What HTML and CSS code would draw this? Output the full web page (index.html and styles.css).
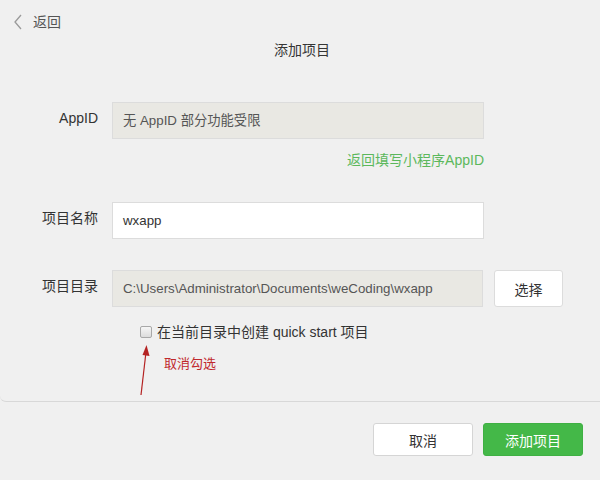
FILE: index.html
```html
<!DOCTYPE html>
<html lang="zh-CN">
<head>
    <meta charset="UTF-8">
    <meta name="viewport" content="width=device-width, initial-scale=1.0">
    <title>添加项目</title>
    <link rel="stylesheet" href="styles.css">
</head>
<body>
    <div class="panel">
        <div class="topbar">
            <svg class="back-icon" width="10" height="16" viewBox="0 0 10 16">
                <path d="M8 1 L2 8 L8 15" fill="none" stroke="#9a9a9a" stroke-width="1.3"/>
            </svg>
            <span class="back-text">返回</span>
        </div>
        <h1 class="title">添加项目</h1>

        <div class="form">
            <div class="form-row first">
                <label class="label">AppID</label>
                <div class="field disabled">无 AppID 部分功能受限</div>
            </div>
            <div class="link-row">
                <a class="green-link">返回填写小程序AppID</a>
            </div>
            <div class="form-row name-row">
                <label class="label">项目名称</label>
                <div class="field">wxapp</div>
            </div>
            <div class="form-row dir-row">
                <label class="label">项目目录</label>
                <div class="field disabled">C:\Users\Administrator\Documents\weCoding\wxapp</div>
                <button class="btn pick">选择</button>
            </div>
            <div class="check-row">
                <span class="checkbox"></span>
                <span>在当前目录中创建 quick start 项目</span>
            </div>
            <div class="note">取消勾选</div>

            <svg class="arrow" width="20" height="60" viewBox="0 0 20 60">
                <line x1="3" y1="53" x2="8" y2="10" stroke="#b42222" stroke-width="1.2"/>
                <path d="M8.5 3 L4.5 13 L11.5 14 Z" fill="#b42222"/>
            </svg>
        </div>
    </div>

    <div class="footer">
        <button class="btn cancel">取消</button>
        <button class="btn primary">添加项目</button>
    </div>
</body>
</html>
```

FILE: styles.css
```css
body {
    margin: 0;
    background: #f0f0f0;
    font-family: "Liberation Sans", "Noto Sans CJK SC", sans-serif;
    font-size: 14px;
    color: #333;
}
.panel {
    border-bottom: 1px solid #d8d8d8;
    border-bottom-left-radius: 6px;
    padding-bottom: 27px;
}
.topbar {
    display: flex;
    align-items: center;
    padding: 12px 0 0 13px;
    height: 20px;
}
.back-icon {
    margin-right: 10px;
}
.back-text {
    color: #555;
    line-height: 20px;
}
.title {
    margin: 8px 0 0;
    font-size: 14px;
    font-weight: normal;
    line-height: 20px;
    text-align: center;
    color: #353535;
    padding-left: 4px;
}
.form {
    position: relative;
    padding-left: 30px;
}
.form-row {
    display: flex;
    align-items: flex-start;
}
.form-row.first {
    margin-top: 42px;
}
.form-row.name-row {
    margin-top: 32px;
}
.form-row.dir-row {
    margin-top: 31px;
}
.label {
    width: 68px;
    text-align: right;
    margin-right: 14px;
    padding-top: 6px;
    line-height: 20px;
    color: #333;
}
.field {
    box-sizing: border-box;
    width: 372px;
    height: 37px;
    line-height: 35px;
    padding: 0 10px;
    background: #fff;
    border: 1px solid #dcdcdc;
    font-size: 13.3px;
    color: #333;
    white-space: nowrap;
    overflow: hidden;
}
.field.disabled {
    background: #e9e8e3;
    color: #555;
}
.dir-row .field {
    width: 371px;
}
.link-row {
    width: 454px;
    text-align: right;
    margin-top: 11px;
    line-height: 20px;
}
.green-link {
    color: #5cb85c;
    font-size: 14px;
}
.btn {
    box-sizing: border-box;
    font-family: inherit;
    font-size: 14px;
    border-radius: 3px;
    cursor: pointer;
}
.pick {
    width: 69px;
    height: 37px;
    margin-left: 11px;
    background: #fff;
    border: 1px solid #dcdcdc;
    color: #333;
}
.check-row {
    display: flex;
    align-items: center;
    margin: 15px 0 0 110px;
    line-height: 20px;
    color: #333;
}
.checkbox {
    box-sizing: border-box;
    width: 12px;
    height: 12px;
    border: 1px solid #a8a8a8;
    border-radius: 2px;
    background: linear-gradient(#f6f6f6, #dcdcdc);
    margin-right: 5px;
}
.note {
    margin: 12px 0 0 134px;
    line-height: 20px;
    font-size: 13px;
    color: #c0282d;
}
.arrow {
    position: absolute;
    left: 138px;
    top: 240px;
}
.footer {
    display: flex;
    justify-content: flex-end;
    gap: 10px;
    padding: 21px 17px 0 0;
}
.cancel {
    width: 100px;
    height: 33px;
    background: #fff;
    border: 1px solid #d5d5d5;
    color: #333;
}
.primary {
    width: 100px;
    height: 33px;
    background: #44b848;
    border: 1px solid #3fb043;
    color: #fff;
}
```
